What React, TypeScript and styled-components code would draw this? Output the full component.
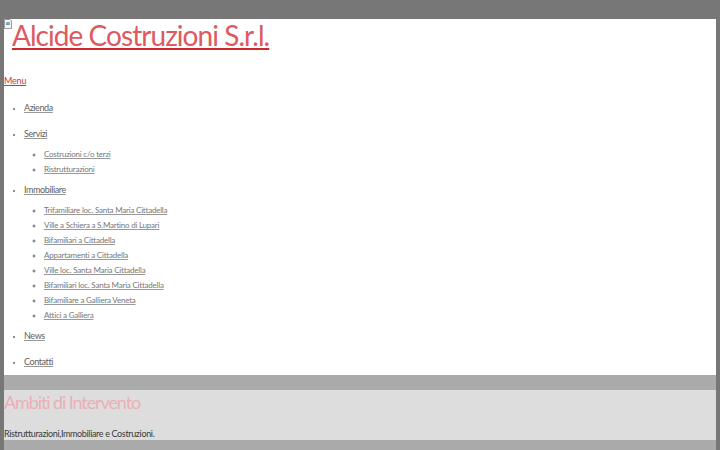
import React from 'react';
import styled, { createGlobalStyle } from 'styled-components';

const GlobalStyle = createGlobalStyle`
  html, body {
    margin: 0;
    padding: 0;
    background: #777777;
  }
  body {
    font-family: 'Lato', 'Liberation Sans', sans-serif;
    font-weight: 400;
  }
`;

const Page = styled.div`
  padding: 19px 4px 0 4px;
`;

const Header = styled.header`
  background: #ffffff;
`;

const Logo = styled.h1`
  margin: 0;
  font-size: 28px;
  font-weight: 400;
  line-height: 33px;
  white-space: nowrap;
`;

const BrokenImage = styled.span`
  display: inline-block;
  width: 8px;
  height: 10px;
  vertical-align: top;

  svg {
    display: block;
  }
`;

const LogoLink = styled.a`
  color: #dc5a60;
  text-decoration: underline;
  text-decoration-thickness: 2px;
  text-underline-offset: 2px;
  text-decoration-color: #d0262c;
  letter-spacing: -0.95px;
`;

const MenuToggle = styled.a`
  display: block;
  margin-top: 21px;
  font-size: 9px;
  line-height: 15px;
  color: #c8383c;
  text-decoration: underline;
  letter-spacing: -0.2px;
`;

const NavList = styled.ul`
  margin: 7px 0 0 0;
  padding: 0 0 0 20px;
  list-style: disc;
  font-size: 9px;
  color: #666666;
`;

const NavItem = styled.li`
  &::marker {
    font-size: 7px;
    color: #666666;
  }
`;

const NavLink = styled.a<{ $sub?: boolean }>`
  display: block;
  line-height: ${p => (p.$sub ? '15px' : '16px')};
  padding: ${p => (p.$sub ? '0' : '5px 0')};
  color: ${p => (p.$sub ? '#777777' : '#606060')};
  font-size: ${p => (p.$sub ? '8px' : '9px')};
  letter-spacing: ${p => (p.$sub ? '-0.22px' : '-0.4px')};
  text-decoration: underline;
  text-decoration-color: #999999;
`;

const SubList = styled.ul`
  margin: 0;
  padding: 0 0 0 20px;
  list-style: circle;
`;

const Band = styled.div`
  height: 15px;
  background: #aaaaaa;
`;

const Section = styled.section`
  background: #dddddd;
  height: 50px;
`;

const SectionTitle = styled.h2`
  margin: 0;
  padding-top: 1px;
  font-size: 18px;
  font-weight: 400;
  line-height: 22px;
  letter-spacing: -1.1px;
  color: #eab0b6;
`;

const SectionText = styled.p`
  margin: 15px 0 0 0;
  font-size: 9px;
  font-weight: 400;
  line-height: 12px;
  letter-spacing: -0.35px;
  color: #3a3a3a;
`;

const BottomBand = styled.div`
  height: 40px;
  background: #aaaaaa;
`;

const BrokenIcon = () => (
  <BrokenImage>
    <svg width="8" height="10" viewBox="0 0 8 10">
      <path d="M0.5 0.5H6L7.5 2V9.5H0.5Z" fill="#f4f4f4" stroke="#9a9a9a" strokeWidth="1" />
      <rect x="2" y="3" width="4" height="3" fill="#7fb0d8" />
      <path d="M2 6L3.5 4.5L5 6Z" fill="#6aa050" />
    </svg>
  </BrokenImage>
);

const servizi = ['Costruzioni c/o terzi', 'Ristrutturazioni'];
const immobiliare = [
  'Trifamiliare loc. Santa Maria Cittadella',
  'Ville a Schiera a S.Martino di Lupari',
  'Bifamiliari a Cittadella',
  'Appartamenti a Cittadella',
  'Ville loc. Santa Maria Cittadella',
  'Bifamiliari loc. Santa Maria Cittadella',
  'Bifamiliare a Galliera Veneta',
  'Attici a Galliera',
];

export default function App() {
  return (
    <>
      <GlobalStyle />
      <Page>
        <Header>
          <Logo>
            <BrokenIcon />
            <LogoLink href="#">Alcide Costruzioni S.r.l.</LogoLink>
          </Logo>
          <MenuToggle href="#">Menu</MenuToggle>
          <NavList>
            <NavItem><NavLink href="#">Azienda</NavLink></NavItem>
            <NavItem>
              <NavLink href="#">Servizi</NavLink>
              <SubList>
                {servizi.map(s => (
                  <NavItem key={s}><NavLink $sub href="#">{s}</NavLink></NavItem>
                ))}
              </SubList>
            </NavItem>
            <NavItem>
              <NavLink href="#">Immobiliare</NavLink>
              <SubList>
                {immobiliare.map(s => (
                  <NavItem key={s}><NavLink $sub href="#">{s}</NavLink></NavItem>
                ))}
              </SubList>
            </NavItem>
            <NavItem><NavLink href="#">News</NavLink></NavItem>
            <NavItem><NavLink href="#">Contatti</NavLink></NavItem>
          </NavList>
        </Header>
        <Band />
        <Section>
          <SectionTitle>Ambiti di Intervento</SectionTitle>
          <SectionText>Ristrutturazioni,Immobiliare e Costruzioni.</SectionText>
        </Section>
        <BottomBand />
      </Page>
    </>
  );
}
